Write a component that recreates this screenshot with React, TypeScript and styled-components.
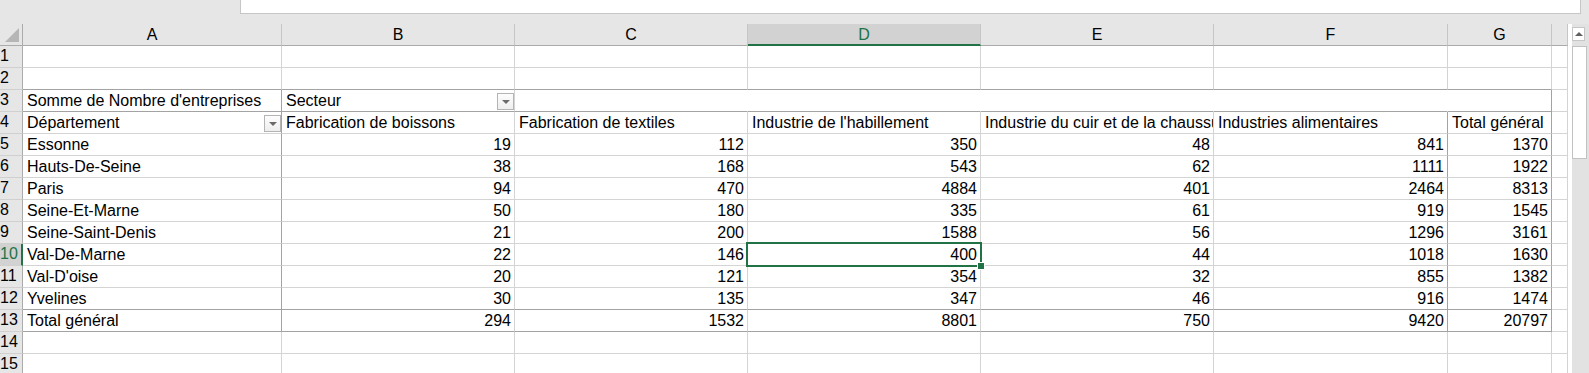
import styled, { createGlobalStyle } from 'styled-components';

const GlobalStyle = createGlobalStyle`
  html, body {
    margin: 0;
    padding: 0;
    overflow: hidden;
    background: #e6e6e6;
  }
  * {
    box-sizing: border-box;
  }
`;

type Line = 'light' | 'dark' | 'blank';

const lineColor: Record<Line, string> = {
  light: '#d4d4d4',
  dark: '#a3a3a3',
  blank: '#ffffff',
};

const GREEN = '#217346';

const COLS = [259, 233, 233, 233, 233, 234, 104, 16];
const LETTERS = ['A', 'B', 'C', 'D', 'E', 'F', 'G', ''];

const Window = styled.div`
  width: 1589px;
  height: 373px;
  display: flex;
  flex-direction: column;
  font-family: 'Liberation Sans', Arial, sans-serif;
  color: #000;
  background: #e6e6e6;
`;

const FormulaStrip = styled.div`
  height: 24px;
  flex: none;
  padding-left: 240px;
`;

const FormulaBox = styled.div`
  width: 1341px;
  height: 14px;
  background: #fff;
  border: 1px solid #c6c6c6;
  border-top: none;
`;

const Main = styled.div`
  display: flex;
  flex: 1;
  min-height: 0;
`;

const Sheet = styled.div`
  display: grid;
  grid-template-columns: 23px ${COLS.map((c) => `${c}px`).join(' ')};
  grid-template-rows: 22px;
  grid-auto-rows: 22px;
  background: #fff;
  align-content: start;
`;

const Corner = styled.div`
  background: #e6e6e6;
  border-right: 1px solid #ababab;
  border-bottom: 1px solid #ababab;
  display: flex;
  align-items: flex-end;
  justify-content: flex-end;
  padding: 0 3px 3px 0;
`;

const ColHead = styled.div<{ $active?: boolean }>`
  background: ${(p) => (p.$active ? '#d2d2d2' : '#e6e6e6')};
  color: ${(p) => (p.$active ? GREEN : '#000')};
  border-right: 1px solid #c6c6c6;
  border-bottom: ${(p) => (p.$active ? `2px solid ${GREEN}` : '1px solid #ababab')};
  font-size: 16px;
  line-height: 20px;
  text-align: center;
  padding-top: 1px;
`;

const RowHead = styled.div<{ $active?: boolean }>`
  background: ${(p) => (p.$active ? '#d2d2d2' : '#e6e6e6')};
  color: ${(p) => (p.$active ? GREEN : '#000')};
  border-right: ${(p) => (p.$active ? `2px solid ${GREEN}` : '1px solid #ababab')};
  border-bottom: 1px solid #d0d0d0;
  font-size: 16px;
  line-height: 20px;
  padding-left: 0;
  white-space: nowrap;
  overflow: hidden;
`;

const Cell = styled.div<{ $right: Line; $bottom: Line; $num?: boolean; $selected?: boolean }>`
  position: ${(p) => (p.$selected ? 'relative' : 'static')};
  z-index: ${(p) => (p.$selected ? 1 : 'auto')};
  display: flex;
  align-items: flex-end;
  justify-content: ${(p) => (p.$num ? 'flex-end' : 'space-between')};
  padding: 0 3px 1px 4px;
  background: #fff;
  border-right: 1px solid ${(p) => lineColor[p.$right]};
  border-bottom: 1px solid ${(p) => lineColor[p.$bottom]};
  font-size: 16px;
  line-height: 18px;
  white-space: nowrap;
  overflow: ${(p) => (p.$selected ? 'visible' : 'hidden')};
  min-width: 0;

  ${(p) =>
    p.$selected &&
    `
    &::after {
      content: '';
      position: absolute;
      inset: -2px;
      border: 2px solid ${GREEN};
      pointer-events: none;
    }
  `}
`;

const FillHandle = styled.span`
  position: absolute;
  right: -4px;
  bottom: -4px;
  width: 6px;
  height: 6px;
  background: ${GREEN};
  outline: 1px solid #fff;
  z-index: 2;
`;

const Dropdown = styled.span`
  flex: none;
  width: 17px;
  height: 17px;
  margin: 0 -3px 0 4px;
  align-self: flex-end;
  border: 1px solid #b4b4b4;
  background: linear-gradient(#fdfdfd, #eeeeee);
  display: flex;
  align-items: center;
  justify-content: center;

  &::before {
    content: '';
    width: 0;
    height: 0;
    border-left: 4px solid transparent;
    border-right: 4px solid transparent;
    border-top: 4px solid #6a6a6a;
    margin-top: 1px;
  }
`;

const VScroll = styled.div`
  width: 21px;
  flex: none;
  border-left: 4px solid #fff;
  background: #e2e2e2;
  display: flex;
  flex-direction: column;
  padding-top: 3px;
`;

const ScrollButton = styled.div`
  width: 13px;
  height: 14px;
  background: #fff;
  border: 1px solid #c6c6c6;
  display: flex;
  align-items: center;
  justify-content: center;

  &::before {
    content: '';
    border-left: 4px solid transparent;
    border-right: 4px solid transparent;
    border-bottom: 4px solid #606060;
  }
`;

const Thumb = styled.div`
  width: 15px;
  height: 113px;
  margin-top: 5px;
  background: #fff;
  border: 1px solid #c2c2c2;
`;

const ROWS: (string | number)[][] = [
  ['Essonne', 19, 112, 350, 48, 841, 1370],
  ['Hauts-De-Seine', 38, 168, 543, 62, 1111, 1922],
  ['Paris', 94, 470, 4884, 401, 2464, 8313],
  ['Seine-Et-Marne', 50, 180, 335, 61, 919, 1545],
  ['Seine-Saint-Denis', 21, 200, 1588, 56, 1296, 3161],
  ['Val-De-Marne', 22, 146, 400, 44, 1018, 1630],
  ["Val-D'oise", 20, 121, 354, 32, 855, 1382],
  ['Yvelines', 30, 135, 347, 46, 916, 1474],
  ['Total général', 294, 1532, 8801, 750, 9420, 20797],
];

const HEADERS = [
  'Département',
  'Fabrication de boissons',
  'Fabrication de textiles',
  "Industrie de l'habillement",
  'Industrie du cuir et de la chaussure',
  'Industries alimentaires',
  'Total général',
];

// border colours of the pivot table (rows 3..13, columns A..G)
const rightLine = (row: number, col: number): Line => {
  if (col === 7 || row < 3 || row > 13) return 'light';
  if (col === 0 || col === 6) return 'dark';
  if (row === 3) return col === 1 ? 'light' : 'blank';
  if (col === 5) return 'dark';
  return 'light';
};

const bottomLine = (row: number, col: number): Line => {
  if (col === 7) return 'light';
  if (row === 2 || row === 3 || row === 12 || row === 13) return 'dark';
  return 'light';
};

const cellContent = (row: number, col: number) => {
  if (row === 3) {
    if (col === 0) return { text: "Somme de Nombre d'entreprises" };
    if (col === 1) return { text: 'Secteur', dropdown: true };
    return { text: '' };
  }
  if (row === 4 && col < 7) {
    return { text: HEADERS[col], dropdown: col === 0 };
  }
  if (row >= 5 && row <= 13 && col < 7) {
    const v = ROWS[row - 5][col];
    return { text: String(v), num: typeof v === 'number' };
  }
  return { text: '' };
};

const App = () => {
  const rows = Array.from({ length: 15 }, (_, i) => i + 1);

  return (
    <Window>
      <GlobalStyle />
      <FormulaStrip>
        <FormulaBox />
      </FormulaStrip>
      <Main>
        <Sheet>
          <Corner>
            <svg width="14" height="14" viewBox="0 0 14 14">
              <polygon points="14,0 14,14 0,14" fill="#b6b6b6" />
            </svg>
          </Corner>
          {LETTERS.map((l, i) => (
            <ColHead key={i} $active={l === 'D'}>
              {l}
            </ColHead>
          ))}
          {rows.map((r) => [
            <RowHead key={`h${r}`} $active={r === 10}>
              {r}
            </RowHead>,
            ...COLS.map((_, c) => {
              const { text, num, dropdown } = cellContent(r, c);
              const selected = r === 10 && c === 3;
              return (
                <Cell
                  key={`${r}-${c}`}
                  $right={rightLine(r, c)}
                  $bottom={bottomLine(r, c)}
                  $num={num}
                  $selected={selected}
                >
                  {text}
                  {dropdown && <Dropdown />}
                  {selected && <FillHandle />}
                </Cell>
              );
            }),
          ])}
        </Sheet>
        <VScroll>
          <ScrollButton />
          <Thumb />
        </VScroll>
      </Main>
    </Window>
  );
};

export default App;
